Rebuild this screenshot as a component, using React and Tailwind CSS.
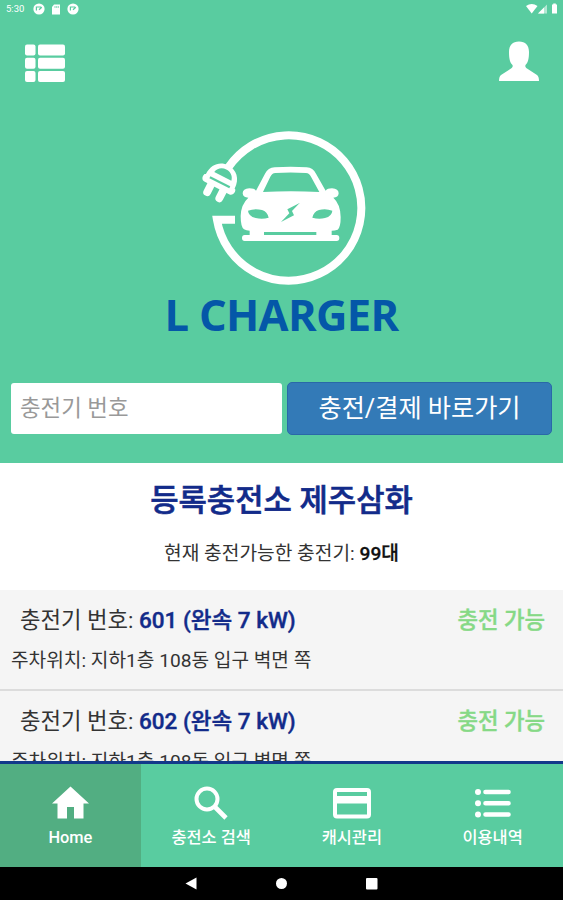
import React from "react";

function ChargerLogo() {
  return (
    <svg viewBox="0 0 570 525" className="h-[175px] w-[190px]" fill="none">
      <path d="M115.300 142 A218 218 0 1 1 80.800 299 H135" stroke="#fff" strokeWidth="24" />
      <g transform="translate(95 176) rotate(27) scale(.93)" fill="#fff">
        <path d="M-52 10 C-52 -27 -29 -48 0 -48 C29 -48 52 -27 52 10 L56 12 C60 22 56 34 44 34 L-44 34 C-56 34 -60 22 -56 12 Z" />
        <path d="M-22 33 V60 M22 33 V60" stroke="#fff" strokeWidth="25" strokeLinecap="round" />
        <path d="M-31 -8 C-28 -25 -14 -33 0 -33 C14 -33 28 -25 31 -8 Z" fill="#59cca0" />
        <path d="M-36 13 H36" stroke="#59cca0" strokeWidth="7" />
      </g>
      <path
        fill="#fff"
        fillRule="evenodd"
        d="M198 212 L225 161 Q234 143 254 142 Q302 138 350 142 Q369 143 378 161 L407 212 Q412 205 426 205 Q446 206 446 220 Q445 233 430 233 Q452 253 452 292 Q452 323 443 329 Q434 332 425 332 V345 H440 Q448 345 448 354 Q448 363 440 363 H164 Q156 363 156 354 Q156 345 164 345 H179 V332 Q169 332 162 328 Q152 321 152 288 Q153 253 175 233 Q159 233 158 220 Q158 206 178 205 Q193 205 198 212 Z M219 216 Q302 212 388 216 L363 170 Q358 160 348 159 Q302 156 256 159 Q246 160 241 170 Z M174 272 Q194 264 216 270 Q232 275 236 293 Q217 299 197 294 Q175 288 174 272 Z M427 272 Q407 264 387 270 Q371 275 367 293 Q387 299 405 294 Q426 288 427 272 Z M329 249 L292 268 L298 280 L273 306 L312 286 L306 273 Z M222 336 V345 H379 V336 Z"
      />
    </svg>
  );
}

function NavItem({ label, active, children }) {
  return (
    <div className={"flex flex-1 flex-col items-center pt-[18px] " + (active ? "bg-[#52ae82]" : "")}>
      <svg viewBox="0 0 42 42" className="h-[42px] w-[42px] shrink-0" fill="#fff">
        {children}
      </svg>
      <span className="mt-[2px] text-[16.400px] leading-6 font-medium whitespace-nowrap">{label}</span>
    </div>
  );
}

function Charger({ id }) {
  return (
    <div className="h-[101px] shrink-0 border-b-2 border-[#dcdcdc] px-[11px] pt-[14px]">
      <div className="flex justify-between pr-[7px] pl-[9px] text-[22.300px] leading-8 whitespace-nowrap">
        <div>
          충전기 번호: <b className="text-[22.500px] font-medium text-[#122b8a] [-webkit-text-stroke:0.4px_#122b8a]">{id} (완속 7 kW)</b>
        </div>
        <div className="font-medium text-[#86d986] [-webkit-text-stroke:0.4px_#86d986]">충전 가능</div>
      </div>
      <div className="mt-[11px] text-[19.150px] leading-7 whitespace-nowrap">주차위치: 지하1층 108동 입구 벽면 쪽</div>
    </div>
  );
}

function AppBadge() {
  return (
    <svg viewBox="0 0 12 12" className="h-3 w-3">
      <circle cx="6" cy="6" r="5.6" fill="#fff" />
      <path d="M3.4 7.5 V4 H8.2 M6 6.8 L8.8 4.2" stroke="#59cca0" strokeWidth="1.2" fill="none" />
    </svg>
  );
}

export default function App() {
  return (
    <div className="flex h-[900px] w-[563px] flex-col overflow-hidden bg-white font-['Roboto','Noto_Sans_CJK_KR',sans-serif] text-[#333]">
      <header className="flex h-[463px] shrink-0 flex-col bg-[#59cca0]">
        <div className="flex h-[18px] items-center justify-between pr-1 pl-[6px] text-white">
          <div className="flex items-center">
            <span className="w-[27px] text-[9.5px]">5:30</span>
            <AppBadge />
            <svg viewBox="0 0 10 11" className="mx-[6px] h-[11px] w-[10px]" fill="#fff">
              <path d="M3 .5 H9 V10.5 H1 V3 Z" />
              <path d="M4 2 V4 M5.7 2 V4 M7.3 2 V4" stroke="#59cca0" strokeWidth=".7" />
            </svg>
            <AppBadge />
          </div>
          <svg viewBox="0 0 34 12" className="h-3 w-[34px]" fill="#fff">
            <path d="M1 3 Q6.700 -1 12.500 3 L6.700 10.500 Z" />
            <path d="M13 10.500 L22 1.500 V10.500 Z" opacity=".55" />
            <path d="M13 10.500 L19 4.500 V10.500 Z" />
            <path d="M27 1.500 H28.200 V.6 H30.800 V1.500 H32 V10.500 H27 Z" />
          </svg>
        </div>
        <div className="flex h-[70px] shrink-0 justify-between pr-[24px] pl-[25px]">
          <svg viewBox="0 0 40 38" className="mt-[26px] h-[38px] w-[40px]" fill="#fff">
            <rect y=".5" width="10.500" height="11" rx="2" />
            <rect x="13" y=".5" width="27" height="11" rx="2" />
            <rect y="13.800" width="10.500" height="11" rx="2" />
            <rect x="13" y="13.800" width="27" height="11" rx="2" />
            <rect y="27" width="10.500" height="11" rx="2" />
            <rect x="13" y="27" width="27" height="11" rx="2" />
          </svg>
          <svg viewBox="0 0 40 40" className="mt-[23px] h-[40px] w-[40px]" fill="#fff">
            <path d="M20 .5 C26.500 .5 30 4.500 30 11 C30 18 29 21.500 26.500 24 C26 25.500 26.500 26.500 28 27.500 L38 34 Q40 35.500 40 40 H0 Q0 35.500 2 34 L12 27.500 C13.500 26.500 14 25.500 13.500 24 C11 21.500 10 18 10 11 C10 4.500 13.500 .5 20 .5 Z" />
          </svg>
        </div>
        <div className="mt-[32px] flex h-[175px] shrink-0 pl-[190px]">
          <ChargerLogo />
        </div>
        <div className="flex h-[87px] shrink-0 justify-center font-['Open_Sans',sans-serif] text-[43.500px] leading-[40px] font-bold tracking-[-0.7px] whitespace-nowrap text-[#0457a8]">
          L CHARGER
        </div>
        <div className="flex h-[53px] shrink-0 gap-[5px] px-[11px]">
          <div className="my-[1px] w-[271px] rounded-[3px] bg-white pl-[9px] text-[22.400px] leading-[51px] text-[#999]">충전기 번호</div>
          <div className="flex-1 rounded-[5px] border border-[#2a68a8] bg-[#337ab7] text-center text-[25.200px] leading-[51px] text-white">충전/결제 바로가기</div>
        </div>
      </header>

      <section className="flex h-[127px] shrink-0 flex-col items-center whitespace-nowrap">
        <h1 className="mt-[15px] text-[30.800px] leading-[46px] font-medium text-[#122b8a] [-webkit-text-stroke:0.6px_#122b8a]">등록충전소 제주삼화</h1>
        <p className="mt-[16px] text-[19.200px] leading-7">
          현재 충전가능한 충전기: <b className="font-medium text-[#111] [-webkit-text-stroke:0.3px_#111]">99대</b>
        </p>
      </section>

      <main className="flex h-[171px] shrink-0 flex-col overflow-hidden bg-[#f5f5f5]">
        <Charger id="601" />
        <Charger id="602" />
      </main>

      <nav className="flex h-[106px] shrink-0 border-t-[3px] border-[#12398a] bg-[#59cca0] text-white">
        <NavItem label="Home" active>
          <path d="M21.500 4.500 L40 21.500 H34.500 V36.500 H25 V25 H18 V36.500 H8.500 V21.500 H3 Z" />
        </NavItem>
        <NavItem label="충전소 검색">
          <circle cx="17" cy="17" r="10.500" fill="none" stroke="#fff" strokeWidth="4" />
          <path d="M24.500 24.500 L36 36" stroke="#fff" strokeWidth="4.600" />
        </NavItem>
        <NavItem label="캐시관리">
          <path fillRule="evenodd" d="M6 6 H36 Q40 6 40 10 V32.500 Q40 36.500 36 36.500 H6 Q2 36.500 2 32.500 V10 Q2 6 6 6 Z M6 10 V14 H36 V10 Z M6 21.500 V32.500 H36 V21.500 Z" />
        </NavItem>
        <NavItem label="이용내역">
          <circle cx="6" cy="10" r="3" />
          <circle cx="6" cy="21.300" r="3" />
          <circle cx="6" cy="32.500" r="3" />
          <path d="M13.500 10 H36.500 M13.500 21.300 H36.500 M13.500 32.500 H36.500" stroke="#fff" strokeWidth="4.600" strokeLinecap="round" />
        </NavItem>
      </nav>

      <footer className="flex h-[33px] shrink-0 bg-black">
        <svg viewBox="0 0 563 33" className="h-[33px] w-[563px]" fill="#fff">
          <path d="M185.500 16.500 L196.500 10.500 V22.500 Z" />
          <circle cx="281.500" cy="16.500" r="5.500" />
          <rect x="366" y="11" width="11.500" height="11.500" rx="1" />
        </svg>
      </footer>
    </div>
  );
}
